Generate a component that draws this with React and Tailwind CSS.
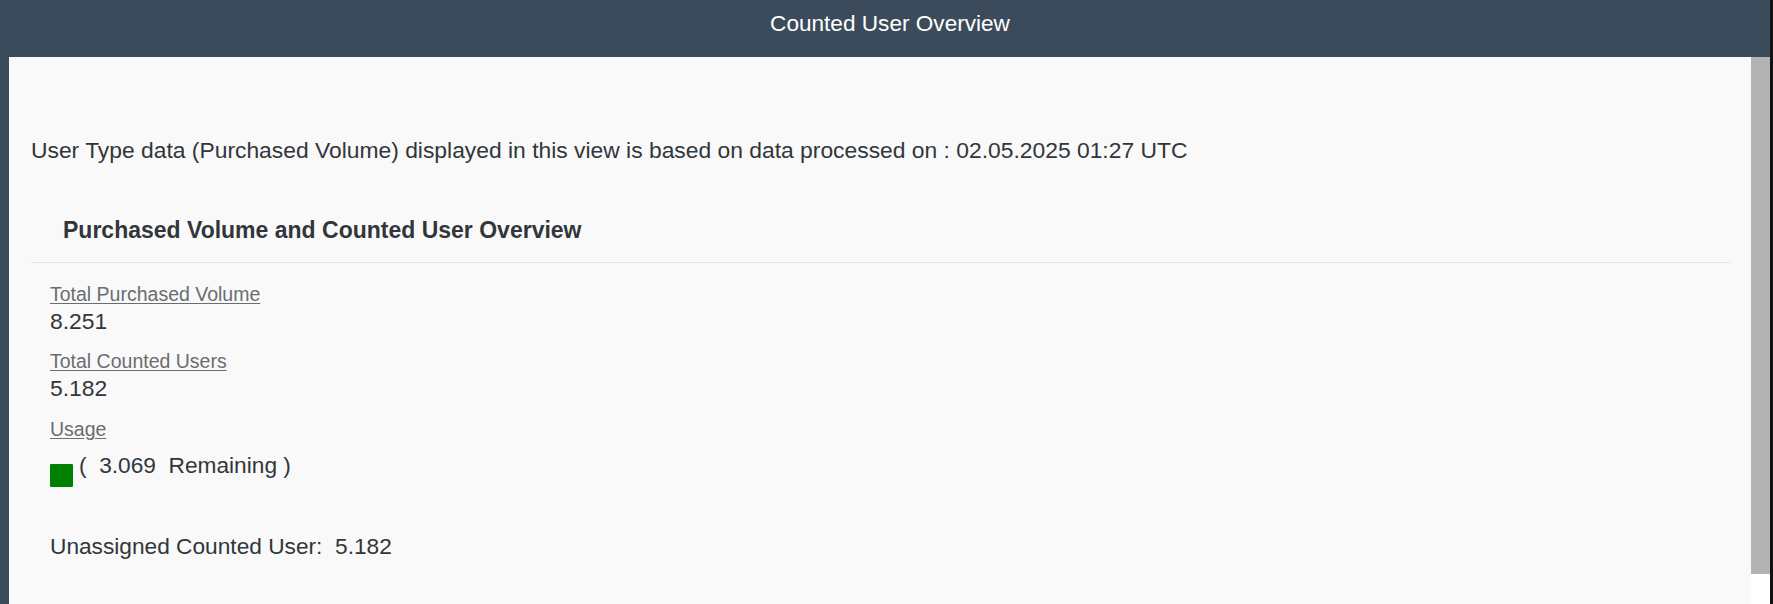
export default function App() {
  const font = { fontFamily: '"Liberation Sans", Arial, sans-serif' };

  return (
    <div className="flex h-[604px] w-[1773px] overflow-hidden bg-[#121212]" style={font}>
      <div className="flex w-[1770px] flex-col bg-[#3c4b5b]">
        <header className="flex h-[57px] shrink-0 justify-center">
          <h1 className="mt-[10px] ml-[10px] text-[22.6px] leading-[28px] font-normal text-white">
            Counted User Overview
          </h1>
        </header>

        <div className="flex min-h-0 flex-1 pl-[9px]">
          <main className="flex-1 bg-[#f9f9f9] pt-[79px] pr-[20px] pl-[22px] text-[#32363a]">
            <p className="text-[22.85px] leading-[28px]">
              User Type data (Purchased Volume) displayed in this view is based on data processed on : 02.05.2025 01:27 UTC
            </p>

            <section className="mt-[52px]">
              <div className="border-b border-[#e5e5e5] pb-[18px]">
                <h2 className="pl-[32px] text-[23px] leading-[28px] font-bold text-[#32363a]">
                  Purchased Volume and Counted User Overview
                </h2>
              </div>

              <div className="flex flex-col pt-[18px] pl-[19px]">
                <span className="self-start text-[19.5px] leading-[26px] text-[#6a6d70] underline underline-offset-2">
                  Total Purchased Volume
                </span>
                <span className="text-[22.9px] leading-[28px]">8.251</span>

                <span className="mt-[13px] self-start text-[19.5px] leading-[26px] text-[#6a6d70] underline underline-offset-2">
                  Total Counted Users
                </span>
                <span className="text-[22.9px] leading-[28px]">5.182</span>

                <span className="mt-[14px] self-start text-[19.5px] leading-[26px] text-[#6a6d70] underline underline-offset-2">
                  Usage
                </span>

                <div className="mt-[9px] flex items-start">
                  <span className="mt-[13px] h-[23px] w-[23px] rounded-[1px] bg-[#008000]" />
                  <span className="ml-[6px] text-[22.7px] leading-[28px] whitespace-pre">
                    {'(  3.069  Remaining )'}
                  </span>
                </div>

                <p className="mt-[45px] text-[22.7px] leading-[28px] whitespace-pre">
                  {'Unassigned Counted User:  5.182'}
                </p>
              </div>
            </section>
          </main>

          <div className="flex w-[19px] flex-col bg-white">
            <div className="h-[517px] bg-[#b3b3b3]" />
          </div>
        </div>
      </div>
    </div>
  );
}
